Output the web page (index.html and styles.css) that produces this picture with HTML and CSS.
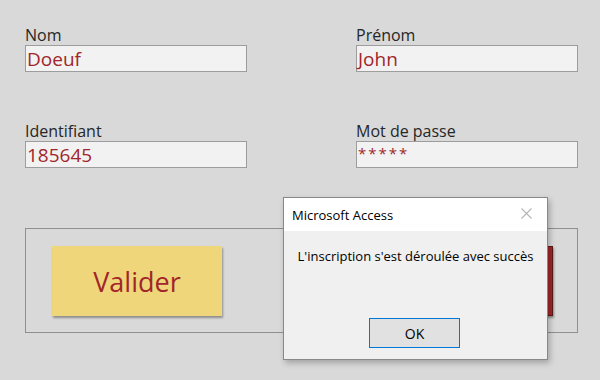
FILE: index.html
```html
<!DOCTYPE html>
<html lang="fr">
<head>
    <meta charset="UTF-8">
    <title>Inscription</title>
    <link rel="stylesheet" href="styles.css">
</head>
<body>

    <div class="form">
        <div class="fields">
            <div class="field">
                <label>Nom</label>
                <div class="box">Doeuf</div>
            </div>
            <div class="field">
                <label>Prénom</label>
                <div class="box">John</div>
            </div>
            <div class="field">
                <label>Identifiant</label>
                <div class="box">185645</div>
            </div>
            <div class="field">
                <label>Mot de passe</label>
                <div class="box password">*****</div>
            </div>
        </div>

        <div class="actions">
            <button class="btn btn-ok">Valider</button>
            <button class="btn btn-cancel">Annuler</button>
        </div>
    </div>

    <!-- message box shown over the form -->
    <div class="dialog">
        <div class="dialog-title">
            <span>Microsoft Access</span>
            <svg class="close" width="11" height="11" viewBox="0 0 11 11">
                <path d="M0.5 0.5 L10.5 10.5 M10.5 0.5 L0.5 10.5" stroke="#b5b5b5" stroke-width="1.1"/>
            </svg>
        </div>
        <div class="dialog-body">
            <p class="dialog-text">L'inscription s'est déroulée avec succès</p>
            <div class="dialog-buttons">
                <button class="dialog-btn">OK</button>
            </div>
        </div>
    </div>

</body>
</html>
```

FILE: styles.css
```css
body {
    margin: 0;
    background-color: #d9d9d9;
    font-family: 'Open Sans', 'Noto Sans', sans-serif;
    width: 600px;
    height: 380px;
    position: relative;
    overflow: hidden;
}

.form {
    padding: 25px 0 0 25px;
}

.fields {
    display: grid;
    grid-template-columns: 222px 222px;
    column-gap: 109px;
    row-gap: 49px;
}

.field {
    display: flex;
    flex-direction: column;
}

.field label {
    font-size: 16px;
    line-height: 20px;
    height: 20px;
    color: #262626;
}

.box {
    box-sizing: border-box;
    height: 27px;
    background-color: #f2f2f2;
    border: 1px solid #9d9d9d;
    color: #a1262a;
    font-size: 19px;
    line-height: 24px;
    padding: 1px 0 0 1px;
}

.box.password {
    font-size: 15px;
    letter-spacing: 2px;
    line-height: 20px;
}

.actions {
    box-sizing: border-box;
    width: 553px;
    height: 105px;
    margin-top: 60px;
    border: 1px solid #8f8f8f;
    padding: 17px 24px 16px 26px;
    display: flex;
    justify-content: space-between;
}

.btn {
    width: 170px;
    height: 70px;
    border: none;
    font-family: 'Open Sans', 'Noto Sans', sans-serif;
    font-size: 27px;
    box-shadow: 1px 2px 2px rgba(0, 0, 0, 0.35);
}

.btn-ok {
    background-color: #f0d67a;
    color: #a1262a;
}

.btn-cancel {
    background-color: #a1262a;
    border: 1px solid #5a1a1a;
    color: #f0d67a;
}

.dialog {
    position: absolute;
    left: 283px;
    top: 197px;
    width: 265px;
    height: 163px;
    box-sizing: border-box;
    border: 1px solid #888888;
    background-color: #f0f0f0;
    box-shadow: 2px 3px 6px rgba(0, 0, 0, 0.25);
    display: flex;
    flex-direction: column;
    font-family: 'Open Sans', 'Noto Sans', sans-serif;
}

.dialog-title {
    height: 33px;
    background-color: #ffffff;
    display: flex;
    align-items: center;
    justify-content: space-between;
    padding: 0 15px 0 8px;
    font-size: 13px;
    color: #000000;
}

.close {
    margin-top: -2px;
}

.dialog-body {
    flex: 1;
    display: flex;
    flex-direction: column;
}

.dialog-text {
    margin: 16px 0 0 0;
    text-align: center;
    font-size: 13px;
    color: #000000;
}

.dialog-buttons {
    margin-top: auto;
    padding-bottom: 11px;
    display: flex;
    justify-content: center;
    padding-right: 2px;
}

.dialog-btn {
    width: 91px;
    height: 30px;
    background-color: #e1e1e1;
    border: 1px solid #0078d7;
    font-family: 'Open Sans', 'Noto Sans', sans-serif;
    font-size: 14px;
    color: #000000;
}
```
